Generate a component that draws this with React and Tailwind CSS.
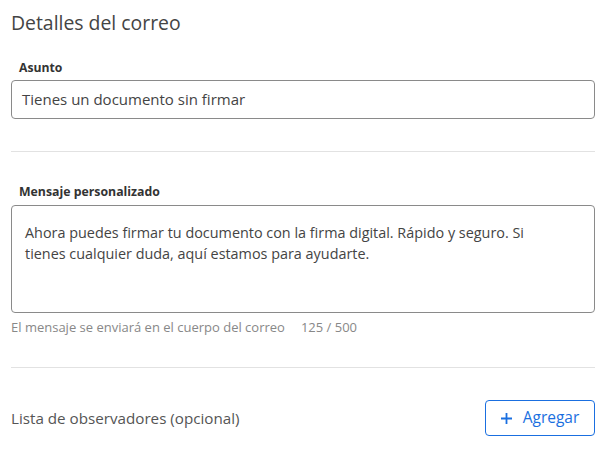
import React from "react";

const font = { fontFamily: '"Open Sans", "Noto Sans", sans-serif' };

export default function App() {
  return (
    <div className="w-[609px] h-[450px] bg-white pl-[11px] pr-[14px] pt-[10px]" style={font}>
      <h2 className="text-[19.4px] leading-[25px] text-[#444] font-normal">Detalles del correo</h2>

      <label className="block mt-[25px] ml-[8px] text-[12.2px] leading-[16px] font-bold text-[#333]">Asunto</label>
      <div className="mt-[4px] h-[39px] border border-[#8a8a8a] rounded-[4px] flex items-center px-[10px] text-[15px] text-[#444]">
        Tienes un documento sin firmar
      </div>

      <div className="mt-[32px] border-t border-[#e2e2e2]" />

      <label className="block mt-[32px] ml-[8px] text-[12.3px] leading-[16px] font-bold text-[#333]">
        Mensaje personalizado
      </label>
      <div className="mt-[5px] h-[108px] border border-[#8a8a8a] rounded-[4px] pl-[13px] pr-[40px] pt-[16px] text-[14.4px] leading-[21px] text-[#444]">
        Ahora puedes firmar tu documento con la firma digital. Rápido y seguro. Si tienes cualquier duda, aquí estamos para ayudarte.
      </div>
      <div className="mt-[6px] text-[13px] leading-[16px] text-[#888] flex gap-[16px]">
        <span>El mensaje se enviará en el cuerpo del correo</span>
        <span>125 / 500</span>
      </div>

      <div className="mt-[32px] border-t border-[#e2e2e2]" />

      <div className="mt-[32px] flex items-center justify-between">
        <span className="text-[15.2px] text-[#555]">Lista de observadores (opcional)</span>
        <button className="w-[110px] h-[36px] border border-[#1a6fe0] rounded-[4px] flex items-center justify-center gap-[11px] text-[15.5px] text-[#1a6fe0]">
          <svg width="11" height="11" viewBox="0 0 11 11" fill="none" stroke="currentColor" strokeWidth="1.8">
            <path d="M5.5 0v11M0 5.5h11" />
          </svg>
          Agregar
        </button>
      </div>
    </div>
  );
}
